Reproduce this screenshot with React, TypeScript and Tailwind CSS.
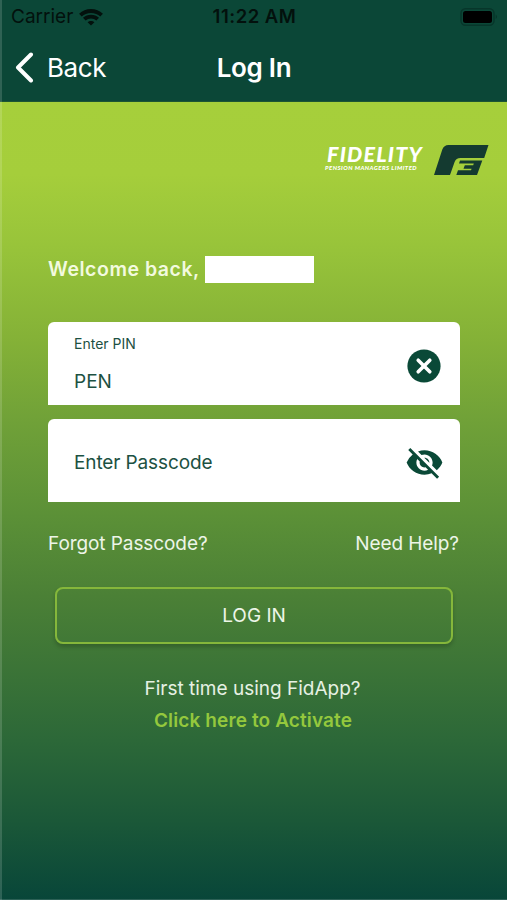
import React from 'react';
import { MdVisibilityOff } from 'react-icons/md';

const WifiIcon = () => (
  <svg width="24" height="17" viewBox="0 0 24 17" fill="none" stroke="#03110d" strokeWidth="3.8">
    <path d="M1.4 6.2C7.2 .6 16.8 .6 22.6 6.2" />
    <path d="M5.3 10.2C9 6.7 15 6.7 18.7 10.2" />
    <path d="M12 16.6L8.6 13.2C10.4 11.5 13.6 11.5 15.4 13.2Z" fill="#03110d" stroke="none" />
  </svg>
);

const BatteryIcon = () => (
  <svg width="38" height="18" viewBox="0 0 38 18">
    <rect x="1" y=".8" width="33" height="16.4" rx="4.5" fill="none" stroke="#07362a" strokeWidth="1.4" />
    <rect x="3" y="3" width="29" height="12" rx="2.5" fill="#000" />
    <path d="M35.7 6.5C37.5 7.2 37.5 10.3 35.7 11Z" fill="#07362a" />
  </svg>
);

const ClearIcon = () => (
  <svg width="34" height="34" viewBox="0 0 34 34">
    <circle cx="17" cy="17" r="16.6" fill="#0a4937" />
    <path d="M11.2 11.2L22.8 22.8M22.8 11.2L11.2 22.8" stroke="#fff" strokeWidth="3.6" strokeLinecap="round" />
  </svg>
);

const LogoMark = () => (
  <svg width="56" height="32" viewBox="0 0 56 32" fill="#143a30">
    <path d="M1 31L9.3 5.5Q11 1 15.5 1H55.5L51.2 14H27.5Q23 14 21.6 18L17 31Z" />
    <path d="M27 16.4H49.3L44 31H23.3L25 26.3H38L38.6 24.7H30.5L31.8 21.2H40.2L40.8 19.6H26Z" />
  </svg>
);

const App = () => {
  return (
    <div className="relative flex h-[900px] w-[507px] flex-col overflow-hidden bg-[#0b4737] font-['Inter',sans-serif]">
      <header className="h-[102px] shrink-0 border-b border-[#1d5434] pl-0.5 text-white">
        <div className="grid h-[34px] grid-cols-3 items-center pr-[9px] pl-[9px] text-[19px] text-[#03110d]">
          <div className="flex items-center gap-[6px]">
            <span>Carrier</span>
            <WifiIcon />
          </div>
          <span className="text-center text-[18.5px] font-semibold tracking-[0.5px] whitespace-nowrap">11:22 AM</span>
          <div className="flex justify-end">
            <BatteryIcon />
          </div>
        </div>
        <div className="grid h-[67px] grid-cols-3 items-center pr-[14px] pl-[13px]">
          <button className="flex items-center gap-[13px] text-left text-[26px] tracking-[-0.4px]">
            <svg width="19" height="31" viewBox="0 0 19 31" fill="none" stroke="#fff" strokeWidth="4" strokeLinecap="round" strokeLinejoin="round">
              <path d="M16 2.5L3 15.5L16 28.5" />
            </svg>
            Back
          </button>
          <h1 className="text-center text-[26px] font-semibold tracking-[-0.3px]">Log In</h1>
        </div>
      </header>

      <main className="flex flex-1 flex-col bg-[linear-gradient(#a6cf3b_0%,#a5ce3b_9%,#98c43a_18%,#84b137_30%,#70a138_40%,#5b9037_52%,#4b8036_62%,#2c6838_80%,#1b5838_90%,#084639_100%)] pr-[47px] pl-12">
        <div className="mr-[-29px] flex justify-end gap-[10px] pt-[42px]">
          <div className="flex flex-col pt-px font-['Lato',sans-serif] text-white italic">
            <span className="pl-0.5 text-[21.5px] leading-[19px] font-black tracking-[1.2px]">FIDELITY</span>
            <span className="text-[6px] leading-[7px] font-black tracking-[0.45px] whitespace-nowrap">PENSION MANAGERS LIMITED</span>
          </div>
          <LogoMark />
        </div>

        <div className="mt-[79px] flex items-center gap-[5px]">
          <span className="text-[19.5px] font-semibold tracking-[0.52px] text-[#f2fadf]">Welcome back,</span>
          <div className="h-[27px] w-[109px] bg-white" />
        </div>

        <div className="mt-[38px] flex h-[83px] items-center justify-between rounded-t-md bg-white pt-1 pr-[19px] pl-[26px] text-[#1c5142]">
          <div className="flex flex-col pb-1">
            <label className="text-[14px] leading-5">Enter PIN</label>
            <span className="mt-[16px] text-[19px] leading-6">PEN</span>
          </div>
          <ClearIcon />
        </div>

        <div className="mt-[14px] flex h-[83px] items-center justify-between rounded-t-md bg-white pt-[3px] pr-[16px] pl-[26px] text-[#1c5142]">
          <span className="pt-0.5 text-[19px] tracking-[-0.12px]">Enter Passcode</span>
          <MdVisibilityOff size={39} color="#0a4937" />
        </div>

        <div className="mt-[28px] flex justify-between pr-px text-[19px] leading-7 tracking-[-0.08px] text-[#edf5e8]">
          <a>Forgot Passcode?</a>
          <a>Need Help?</a>
        </div>

        <button className="mx-[7px] mt-[29px] h-[57px] shrink-0 rounded-lg border-2 border-[#85b73b] text-[19px] text-[#edf5e8] shadow-[0_3px_4px_rgba(0,0,0,0.2)]">
          LOG IN
        </button>

        <div className="mt-[29px] flex flex-col items-center pr-[3px] text-[19px] leading-8 text-[#e6f1e3]">
          <span>First time using FidApp?</span>
          <a className="pl-px font-semibold tracking-[0.12px] text-[#94c83d]">Click here to Activate</a>
        </div>
      </main>

      <div className="absolute inset-y-0 left-0 w-0.5 bg-white/15" />
      <div className="absolute inset-x-0 bottom-0 h-px bg-white/15" />
    </div>
  );
};

export default App;
